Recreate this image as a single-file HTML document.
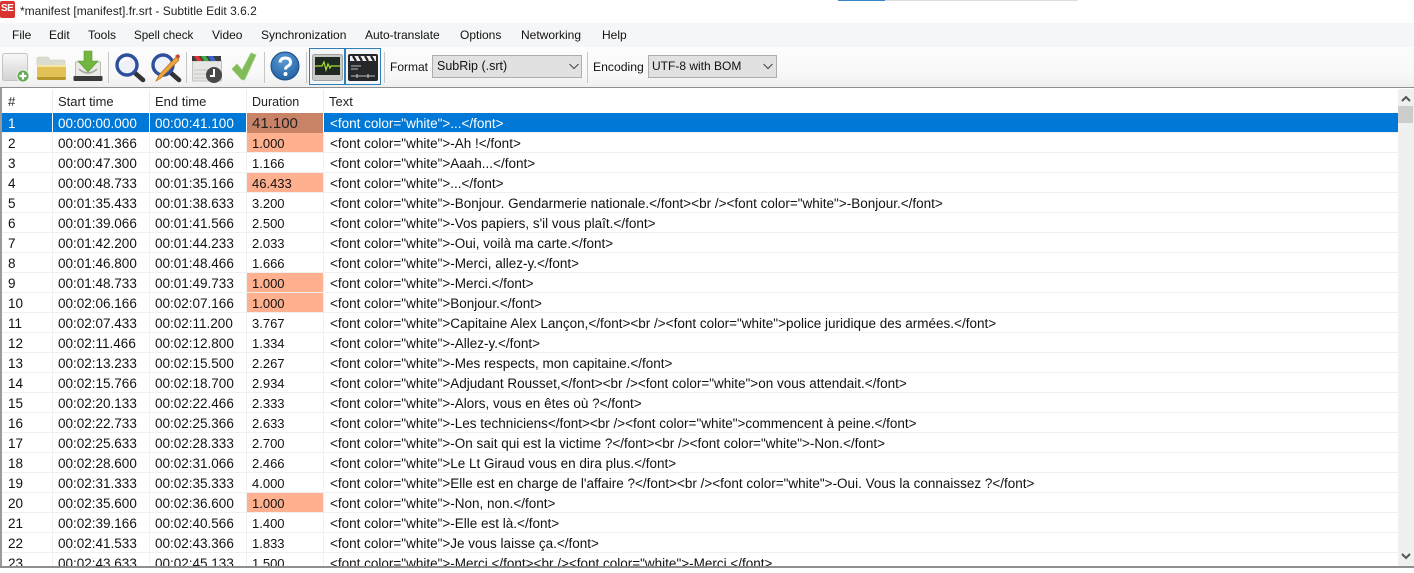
<!DOCTYPE html>
<html><head><meta charset="utf-8"><style>
html,body{margin:0;padding:0;background:#fff}
body{width:1414px;height:573px;position:relative;overflow:hidden;font-family:"Liberation Sans","DejaVu Sans",sans-serif;font-size:13.5px;color:#111}
.a{position:absolute;white-space:pre}
.m{position:absolute;top:28px;white-space:pre;font-size:12px}
.sep{position:absolute;top:52px;height:31px;width:1px;background:#c6c6c6}
.h{position:absolute;top:94px;white-space:pre;color:#222;font-size:13px}
.hl{position:absolute;top:90px;height:23px;width:1px;background:#ececec}
#rows{position:absolute;left:2px;top:113px;width:1396px;height:453px;overflow:hidden}
.r{position:relative;height:20px;box-sizing:border-box;border-bottom:1px solid #f0f0f0;white-space:pre;line-height:21px}
.r span{position:absolute;top:0;height:19px}
.r span:nth-child(1){left:6px;width:43px}
.r span:nth-child(2){left:50px;width:97px;padding-left:5px;box-sizing:border-box;border-left:1px solid #f0f0f0}
.r span:nth-child(3){left:147px;width:97px;padding-left:5px;box-sizing:border-box;border-left:1px solid #f0f0f0}
.r span:nth-child(4){left:244px;width:77px;padding-left:5px;box-sizing:border-box;border-left:1px solid #f0f0f0;font-size:13px}
.r span:nth-child(5){left:321px;width:1070px;padding-left:6px;box-sizing:border-box;border-left:1px solid #f0f0f0}
.r span.o{background:#ffb18f}
.s{background:#0078d7;color:#fff}
.r.s span{height:20px;border-color:#fff}
.r.s span.o{background:#c98468;color:#222;font-size:15px}
.combo{position:absolute;top:55px;height:23px;box-sizing:border-box;background:#e1e1e1;border:1px solid #adadad;line-height:21px;padding-left:4px;white-space:pre;font-size:12.5px}
.combo svg{position:absolute;top:7px}
svg{position:absolute;overflow:visible}
</style></head><body>

<div class="a" style="left:838px;top:0;width:47px;height:1px;background:#3a86c6"></div>
<div class="a" style="left:885px;top:0;width:193px;height:1px;background:#dedede"></div>

<svg style="left:0;top:1px" width="15" height="17" viewBox="0 0 15 17"><rect x="0" y="0" width="15" height="17" rx="2" fill="#d9342f"/></svg>
<div class="a" style="left:1px;top:3px;color:#fff;font-weight:bold;font-size:10px;letter-spacing:-.5px">SE</div>
<div class="a" style="left:20px;top:4px;font-size:12px;color:#222">*manifest [manifest].fr.srt - Subtitle Edit 3.6.2</div>

<div class="a" style="left:0;top:23px;width:1414px;height:24px;background:#f5f6f7"></div>
<div class="m" style="left:12px">File</div><div class="m" style="left:49px">Edit</div><div class="m" style="left:88px">Tools</div><div class="m" style="left:134px;top:29px;font-size:11.6px">Spell check</div><div class="m" style="left:212px">Video</div><div class="m" style="left:261px">Synchronization</div><div class="m" style="left:365px">Auto-translate</div><div class="m" style="left:460px">Options</div><div class="m" style="left:521px">Networking</div><div class="m" style="left:602px">Help</div>

<div class="a" style="left:0;top:47px;width:1414px;height:40px;background:linear-gradient(#fcfcfc,#f8f8f8 70%,#eeeeee)"></div>
<div class="a" style="left:0;top:87px;width:1414px;height:1px;background:#8f8f8f"></div>

<svg style="left:0;top:48px" width="30" height="36"><defs><linearGradient id="d" x1="0" y1="0" x2="0" y2="1"><stop offset="0" stop-color="#f8f8f8"/><stop offset="1" stop-color="#d2d2d2"/></linearGradient></defs><rect x="2.500" y="5.500" width="25" height="27" rx="2" fill="url(#d)" stroke="#c4c4c4"/><circle cx="23" cy="28" r="6" fill="#64a854" stroke="#eef5ea"/><path d="M23 24.500v7M19.500 28h7" stroke="#fff" stroke-width="2.200"/></svg>
<svg style="left:35px;top:48px" width="32" height="36"><path d="M2 11q0-2 2-2h9l2 3h13q2 0 2 2v4H2z" fill="#dcdbd0" stroke="#c9c8ba" stroke-width=".6"/><path d="M2 17h29v13q0 2-2 2H4q-2 0-2-2z" fill="#e2c257"/><path d="M2 17h29v2H2z" fill="#f4e7a8"/><path d="M2 29h29v1q0 2-2 2H4q-2 0-2-2z" fill="#b8972f"/></svg>
<svg style="left:72px;top:48px" width="32" height="36"><path d="M3.500 14h25v16h-25z" fill="#eaeae6" stroke="#bbbbb6"/><path d="M7 21q9 8 18 0" fill="none" stroke="#a9a9a4" stroke-width="1.600"/><rect x="1.500" y="28" width="29" height="5" rx="1" fill="#3b3b3b"/><path d="M12 3h8v10h6l-10 11L6 13h6z" fill="#72b540" stroke="#5a9a2c" stroke-width=".6"/></svg>
<div class="sep" style="left:108px"></div>
<svg style="left:113px;top:48px" width="32" height="36"><path d="M22 25l8 7" stroke="#333" stroke-width="4.600" stroke-linecap="round"/><circle cx="14" cy="17" r="10" fill="#eef2f8" stroke="#2e4f9c" stroke-width="3.400"/><path d="M8 15q3-5 8-4" stroke="#fff" stroke-width="2" fill="none"/></svg>
<svg style="left:149px;top:48px" width="34" height="36"><path d="M22 25l8 7" stroke="#333" stroke-width="4.600" stroke-linecap="round"/><circle cx="14" cy="17" r="10" fill="#eef2f8" stroke="#2e4f9c" stroke-width="3.400"/><path d="M7 33l3-6L27 9l3 3-18 18z" fill="#eea53a" stroke="#b4691b" stroke-width=".7"/><path d="M26 8l3-2 2 2-1 3z" fill="#c9413b"/></svg>
<div class="sep" style="left:186px"></div>
<svg style="left:191px;top:48px" width="34" height="36"><rect x="1.500" y="13" width="29" height="20" fill="#e6e6e4" stroke="#c2c2c2"/><path d="M1 8h29v5H1z" fill="#3d3d3d"/><path d="M3 8h5l3 5H6z" fill="#d33"/><path d="M10 8h5l3 5h-5z" fill="#4a4"/><path d="M17 8h5l3 5h-5z" fill="#36c"/><path d="M3 22h14M3 26h14M3 30h14" stroke="#c4c4c4"/><circle cx="23" cy="27" r="8" fill="#484848"/><path d="M23 21v7h-4" stroke="#fff" stroke-width="2" fill="none"/></svg>
<svg style="left:230px;top:48px" width="28" height="36"><path d="M2 21l5-5 5 6L21 5l5 2-11 24q-2 2-4 0z" fill="#80bb58" stroke="#9ccc7c" stroke-width=".8"/></svg>
<div class="sep" style="left:264px"></div>
<svg style="left:270px;top:51px" width="30" height="30"><defs><radialGradient id="q" cx=".45" cy=".3" r=".8"><stop offset="0" stop-color="#5c9ad6"/><stop offset="1" stop-color="#1d5a9c"/></radialGradient></defs><circle cx="15" cy="15" r="14" fill="url(#q)" stroke="#194f88"/><path d="M10 11.500q.5-4.500 5.500-4.500 5 .2 5 4.200 0 2.400-2.800 4-2.200 1.300-2.200 3.300" fill="none" stroke="#fff" stroke-width="3"/><circle cx="15.500" cy="23" r="2" fill="#fff"/></svg>
<div class="sep" style="left:306px"></div>

<div class="a" style="left:309px;top:48px;width:36px;height:37px;box-sizing:border-box;border:1px solid #2f7fb5;background:#f3f6f8"></div>
<div class="a" style="left:345px;top:48px;width:36px;height:37px;box-sizing:border-box;border:1px solid #2f7fb5;background:#f3f6f8"></div>
<svg style="left:312px;top:54px" width="32" height="28"><rect x=".5" y=".5" width="30" height="26" rx="2" fill="#c9c9c7" stroke="#a3a3a3"/><rect x="3" y="3" width="25" height="18" fill="#1f2a22"/><path d="M3 12h7l2-4 2 8 2-6 2 4 1-2h9" fill="none" stroke="#a7e02f" stroke-width="1.200"/></svg>
<svg style="left:348px;top:54px" width="32" height="28"><rect x="0" y="0" width="30" height="27" rx="2" fill="#26272a"/><path d="M2 2h26v5H2z" fill="#eee"/><path d="M5 2l3 5M11 2l3 5M17 2l3 5M23 2l3 5" stroke="#222" stroke-width="2.200"/><path d="M3 12h10M3 15h7M3 22h24" stroke="#bbb"/><path d="M9 20v4M20 20v4" stroke="#ccc"/></svg>
<div class="sep" style="left:384px"></div>
<div class="a" style="left:390px;top:60px;font-size:12px">Format</div>
<div class="combo" style="left:432px;width:150px">SubRip (.srt)<svg style="left:136px" width="10" height="7"><path d="M.5 1l4.500 4.500L9.500 1" fill="none" stroke="#444"/></svg></div>
<div class="sep" style="left:587px"></div>
<div class="a" style="left:593px;top:60px;font-size:12.2px">Encoding</div>
<div class="combo" style="left:648px;width:129px;font-size:12px;padding-left:3px">UTF-8 with BOM<svg style="left:114px" width="10" height="7"><path d="M.5 1l4.500 4.500L9.500 1" fill="none" stroke="#444"/></svg></div>

<div class="a" style="left:0;top:88px;width:2px;height:479px;background:#9a9a9a"></div>
<div class="a" style="left:0;top:566px;width:1414px;height:2px;background:#8f8f8f"></div>
<div class="h" style="left:8px">#</div><div class="h" style="left:58px">Start time</div><div class="h" style="left:155px">End time</div><div class="h" style="left:252px;top:95px;font-size:12.5px">Duration</div><div class="h" style="left:329px">Text</div>
<div class="hl" style="left:52px"></div><div class="hl" style="left:149px"></div><div class="hl" style="left:246px"></div><div class="hl" style="left:323px"></div>

<div id="rows">
<div class="r s"><span>1</span><span>00:00:00.000</span><span>00:00:41.100</span><span class="o">41.100</span><span>&lt;font color="white"&gt;...&lt;/font&gt;</span></div>
<div class="r"><span>2</span><span>00:00:41.366</span><span>00:00:42.366</span><span class="o">1.000</span><span>&lt;font color="white"&gt;-Ah !&lt;/font&gt;</span></div>
<div class="r"><span>3</span><span>00:00:47.300</span><span>00:00:48.466</span><span>1.166</span><span>&lt;font color="white"&gt;Aaah...&lt;/font&gt;</span></div>
<div class="r"><span>4</span><span>00:00:48.733</span><span>00:01:35.166</span><span class="o">46.433</span><span>&lt;font color="white"&gt;...&lt;/font&gt;</span></div>
<div class="r"><span>5</span><span>00:01:35.433</span><span>00:01:38.633</span><span>3.200</span><span>&lt;font color="white"&gt;-Bonjour. Gendarmerie nationale.&lt;/font&gt;&lt;br /&gt;&lt;font color="white"&gt;-Bonjour.&lt;/font&gt;</span></div>
<div class="r"><span>6</span><span>00:01:39.066</span><span>00:01:41.566</span><span>2.500</span><span>&lt;font color="white"&gt;-Vos papiers, s'il vous plaît.&lt;/font&gt;</span></div>
<div class="r"><span>7</span><span>00:01:42.200</span><span>00:01:44.233</span><span>2.033</span><span>&lt;font color="white"&gt;-Oui, voilà ma carte.&lt;/font&gt;</span></div>
<div class="r"><span>8</span><span>00:01:46.800</span><span>00:01:48.466</span><span>1.666</span><span>&lt;font color="white"&gt;-Merci, allez-y.&lt;/font&gt;</span></div>
<div class="r"><span>9</span><span>00:01:48.733</span><span>00:01:49.733</span><span class="o">1.000</span><span>&lt;font color="white"&gt;-Merci.&lt;/font&gt;</span></div>
<div class="r"><span>10</span><span>00:02:06.166</span><span>00:02:07.166</span><span class="o">1.000</span><span>&lt;font color="white"&gt;Bonjour.&lt;/font&gt;</span></div>
<div class="r"><span>11</span><span>00:02:07.433</span><span>00:02:11.200</span><span>3.767</span><span>&lt;font color="white"&gt;Capitaine Alex Lançon,&lt;/font&gt;&lt;br /&gt;&lt;font color="white"&gt;police juridique des armées.&lt;/font&gt;</span></div>
<div class="r"><span>12</span><span>00:02:11.466</span><span>00:02:12.800</span><span>1.334</span><span>&lt;font color="white"&gt;-Allez-y.&lt;/font&gt;</span></div>
<div class="r"><span>13</span><span>00:02:13.233</span><span>00:02:15.500</span><span>2.267</span><span>&lt;font color="white"&gt;-Mes respects, mon capitaine.&lt;/font&gt;</span></div>
<div class="r"><span>14</span><span>00:02:15.766</span><span>00:02:18.700</span><span>2.934</span><span>&lt;font color="white"&gt;Adjudant Rousset,&lt;/font&gt;&lt;br /&gt;&lt;font color="white"&gt;on vous attendait.&lt;/font&gt;</span></div>
<div class="r"><span>15</span><span>00:02:20.133</span><span>00:02:22.466</span><span>2.333</span><span>&lt;font color="white"&gt;-Alors, vous en êtes où ?&lt;/font&gt;</span></div>
<div class="r"><span>16</span><span>00:02:22.733</span><span>00:02:25.366</span><span>2.633</span><span>&lt;font color="white"&gt;-Les techniciens&lt;/font&gt;&lt;br /&gt;&lt;font color="white"&gt;commencent à peine.&lt;/font&gt;</span></div>
<div class="r"><span>17</span><span>00:02:25.633</span><span>00:02:28.333</span><span>2.700</span><span>&lt;font color="white"&gt;-On sait qui est la victime ?&lt;/font&gt;&lt;br /&gt;&lt;font color="white"&gt;-Non.&lt;/font&gt;</span></div>
<div class="r"><span>18</span><span>00:02:28.600</span><span>00:02:31.066</span><span>2.466</span><span>&lt;font color="white"&gt;Le Lt Giraud vous en dira plus.&lt;/font&gt;</span></div>
<div class="r"><span>19</span><span>00:02:31.333</span><span>00:02:35.333</span><span>4.000</span><span>&lt;font color="white"&gt;Elle est en charge de l'affaire ?&lt;/font&gt;&lt;br /&gt;&lt;font color="white"&gt;-Oui. Vous la connaissez ?&lt;/font&gt;</span></div>
<div class="r"><span>20</span><span>00:02:35.600</span><span>00:02:36.600</span><span class="o">1.000</span><span>&lt;font color="white"&gt;-Non, non.&lt;/font&gt;</span></div>
<div class="r"><span>21</span><span>00:02:39.166</span><span>00:02:40.566</span><span>1.400</span><span>&lt;font color="white"&gt;-Elle est là.&lt;/font&gt;</span></div>
<div class="r"><span>22</span><span>00:02:41.533</span><span>00:02:43.366</span><span>1.833</span><span>&lt;font color="white"&gt;Je vous laisse ça.&lt;/font&gt;</span></div>
<div class="r"><span>23</span><span>00:02:43.633</span><span>00:02:45.133</span><span>1.500</span><span>&lt;font color="white"&gt;-Merci.&lt;/font&gt;&lt;br /&gt;&lt;font color="white"&gt;-Merci.&lt;/font&gt;</span></div>
</div>

<div class="a" style="left:1398px;top:89px;width:16px;height:477px;background:#f0f0f0"></div>
<div class="a" style="left:1398px;top:106px;width:15px;height:17px;background:#cdcdcd"></div>
<svg style="left:1401px;top:95px" width="10" height="7"><path d="M1 6l4-4 4 4" fill="none" stroke="#555" stroke-width="2"/></svg>
<svg style="left:1401px;top:553px" width="10" height="7"><path d="M1 1l4 4 4-4" fill="none" stroke="#555" stroke-width="2"/></svg>
</body></html>
